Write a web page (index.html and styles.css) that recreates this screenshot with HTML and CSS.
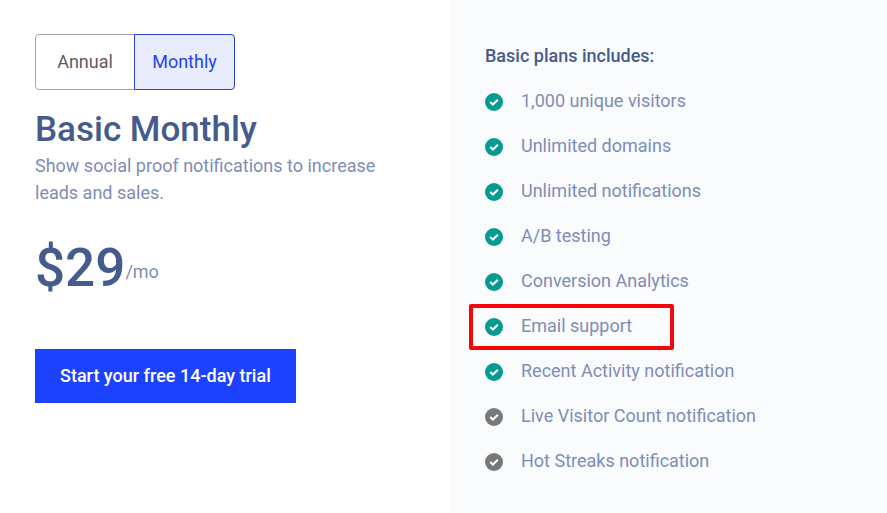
FILE: index.html
```
<!DOCTYPE html>
<html lang="en">
<head>
  <meta charset="UTF-8" />
  <meta name="viewport" content="width=device-width, initial-scale=1.0"/>
  <title>Basic Monthly</title>
  <link rel="stylesheet" href="styles.css">
</head>
<body>
  <svg class="sprite" aria-hidden="true">
    <symbol id="check" viewBox="0 0 18 18">
      <circle cx="9" cy="9" r="9" fill="currentColor"/>
      <path d="M5.2 9l2.7 2.5 5-4.7" fill="none" stroke="#fff" stroke-width="2.1"/>
    </symbol>
  </svg>

  <main class="pricing">
    <section class="plan">
      <div class="toggle" role="group" aria-label="Billing period">
        <button type="button" aria-pressed="false">Annual</button>
        <button type="button" class="active" aria-pressed="true">Monthly</button>
      </div>
      <h1>Basic Monthly</h1>
      <p class="description">Show social proof notifications to increase leads and sales.</p>
      <div class="price"><span class="amount">$29</span><span class="period">/mo</span></div>
      <a href="#" class="btn-trial">Start your free 14-day trial</a>
    </section>

    <section class="features">
      <h2>Basic plans includes:</h2>
      <ul>
        <li><svg class="icon"><use href="#check"/></svg>1,000 unique visitors</li>
        <li><svg class="icon"><use href="#check"/></svg>Unlimited domains</li>
        <li><svg class="icon"><use href="#check"/></svg>Unlimited notifications</li>
        <li><svg class="icon"><use href="#check"/></svg>A/B testing</li>
        <li><svg class="icon"><use href="#check"/></svg>Conversion Analytics</li>
        <li class="highlight"><svg class="icon"><use href="#check"/></svg>Email support</li>
        <li><svg class="icon"><use href="#check"/></svg>Recent Activity notification</li>
        <li class="off"><svg class="icon"><use href="#check"/></svg>Live Visitor Count notification</li>
        <li class="off"><svg class="icon"><use href="#check"/></svg>Hot Streaks notification</li>
      </ul>
    </section>
  </main>
</body>
</html>
```
FILE: styles.css
```
*,
*::after {
  margin: 0;
  padding: 0;
  box-sizing: border-box;
}

body {
  background: #fff;
  color: #7f8db5;
  font-family: Roboto, "Liberation Sans", sans-serif;
  font-size: 18px;
  line-height: 27px;
}

.sprite {
  display: none;
}

.pricing {
  display: grid;
  grid-template-columns: 449fr 438fr;
  min-height: 100vh;
}

.plan {
  padding: 34px 35px;
}

.toggle {
  display: inline-flex;
  vertical-align: top;
  margin-bottom: 18px;
}

.toggle button {
  min-width: 100px;
  height: 56px;
  padding: 0 16px 1px;
  background: #fff;
  border: 1px solid #a5a7aa;
  border-radius: 4px 0 0 4px;
  color: #5c5c5e;
  font: inherit;
  cursor: pointer;
}

.toggle button.active {
  min-width: 101px;
  margin-left: -1px;
  background: #e8ecfd;
  border-color: #2743d0;
  border-radius: 0 4px 4px 0;
  color: #2443e8;
}

h1 {
  color: #455b8c;
  font-size: 35px;
  font-weight: 500;
  line-height: 44px;
}

.price {
  display: flex;
  align-items: center;
  margin: 27px 0 46px;
  line-height: 70px;
}

.amount {
  color: #455b8c;
  font-size: 53px;
  font-weight: 500;
}

.period {
  padding-top: 6px;
  line-height: 27px;
}

.btn-trial {
  display: inline-block;
  padding: 13px 25px 14px;
  background: #1c42ff;
  color: #fff;
  font-weight: 500;
  text-decoration: none;
}

.features {
  padding: 42px 36px;
  background: #f9fbfd;
}

h2 {
  margin-bottom: 18px;
  color: #455b8c;
  font-size: 18px;
  font-weight: 500;
}

ul {
  list-style: none;
}

li {
  display: flex;
  align-items: center;
  position: relative;
  margin-bottom: 18px;
}

.icon {
  width: 18px;
  height: 18px;
  margin-top: 2px;
  margin-right: 18px;
  color: #059a92;
}

.off .icon {
  color: #76787a;
}

/* red frame drawn over the row */
.highlight::after {
  content: "";
  position: absolute;
  top: -8px;
  left: -16px;
  width: 205px;
  height: 46px;
  border: 4px solid #f60509;
  border-radius: 2px;
}
```
